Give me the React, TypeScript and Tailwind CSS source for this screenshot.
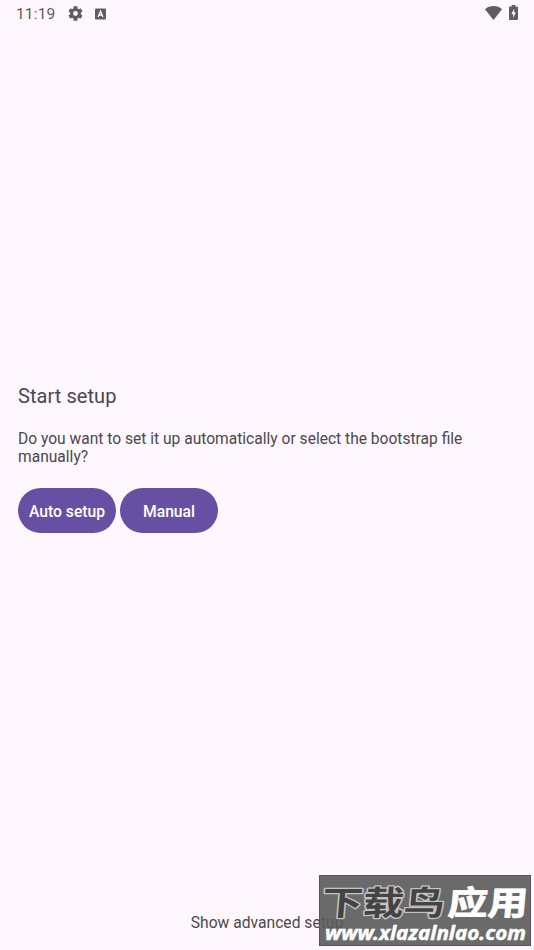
import React from 'react';

const GearIcon: React.FC<{ className?: string }> = ({ className }) => (
    <svg viewBox="2 2 20 20" className={className} fill="currentColor">
        <path d="M19.14 12.94c.04-.3.06-.61.06-.94 0-.32-.02-.64-.07-.94l2.03-1.58a.49.49 0 0 0 .12-.61l-1.92-3.32a.488.488 0 0 0-.59-.22l-2.39.96c-.5-.38-1.03-.7-1.62-.94l-.36-2.54a.484.484 0 0 0-.48-.41h-3.84c-.24 0-.43.17-.47.41l-.36 2.54c-.59.24-1.13.57-1.62.94l-2.39-.96c-.22-.08-.47 0-.59.22L2.74 8.87c-.12.21-.08.47.12.61l2.03 1.58c-.05.3-.09.63-.09.94s.02.64.07.94l-2.03 1.58a.49.49 0 0 0-.12.61l1.92 3.32c.12.22.37.29.59.22l2.39-.96c.5.38 1.03.7 1.62.94l.36 2.54c.05.24.24.41.48.41h3.84c.24 0 .44-.17.47-.41l.36-2.54c.59-.24 1.13-.56 1.62-.94l2.39.96c.22.08.47 0 .59-.22l1.92-3.32c.12-.22.07-.47-.12-.61l-2.01-1.58zM12 15.2A3.2 3.2 0 1 1 12 8.8a3.2 3.2 0 0 1 0 6.4z" />
    </svg>
);

const KeyboardIcon: React.FC<{ className?: string }> = ({ className }) => (
    <svg viewBox="0 0 11 12" className={className}>
        <rect y="0.5" width="11" height="11" rx="1.2" fill="currentColor" />
        <path d="M3.1 8.9 5.5 3.1 7.9 8.9M4 7h3" fill="none" stroke="#fef7ff" strokeWidth="1.3" />
    </svg>
);

const WifiIcon: React.FC<{ className?: string }> = ({ className }) => (
    <svg viewBox="0 0 17 14" className={className} fill="currentColor">
        <path d="M8.5 14 0 3.2C2.3 1.1 5.3 0 8.5 0s6.2 1.1 8.5 3.2z" />
    </svg>
);

const BatteryIcon: React.FC<{ className?: string }> = ({ className }) => (
    <svg viewBox="0 0 9 15" className={className}>
        <path d="M2.7 0h3.6v1.5H8a1 1 0 0 1 1 1V14a1 1 0 0 1-1 1H1a1 1 0 0 1-1-1V2.5a1 1 0 0 1 1-1h1.7z" fill="currentColor" />
        <path d="M5.2 3.8 2.4 9h1.7v3.7L6.9 7.6H5.2z" fill="#fef7ff" />
    </svg>
);

const StatusBar: React.FC = () => (
    <header className="flex h-7 items-center justify-between px-4 text-[#5f5c63]">
        <div className="flex items-center">
            <span className="w-[40px] whitespace-nowrap text-[15.5px] leading-7 tracking-[0.15px]">11:19</span>
            <GearIcon className="mb-px ml-[12px] h-[15px] w-[15px]" />
            <KeyboardIcon className="ml-3 h-3 w-[11px]" />
        </div>
        <div className="flex items-center gap-[7px] pb-[3px]">
            <WifiIcon className="h-[14px] w-[17px]" />
            <BatteryIcon className="h-[15px] w-[9px]" />
        </div>
    </header>
);

const SetupButton: React.FC<{ label: string }> = ({ label }) => (
    <button className="h-[45px] w-[98px] whitespace-nowrap rounded-full bg-[#6750a4] pt-[3px] text-[15.7px] font-medium text-white">
        {label}
    </button>
);

const Watermark: React.FC = () => (
    <div className="absolute left-[319px] top-[875px] h-[71px] w-[212px] border border-[#555] bg-[#5a5a5a]/90">
        <svg viewBox="320 876 210 69" className="h-full w-full">
            <g transform="translate(0 915) skewX(-5)" fontFamily="'Noto Sans CJK SC', sans-serif" fontWeight="700" fontSize="33.5" strokeLinejoin="round">
                <text x="321" y="0" textLength="123" lengthAdjust="spacingAndGlyphs" fill="#444" stroke="#c4c4c4" strokeWidth="2.6" paintOrder="stroke">下载鸟</text>
                <text x="447" y="0" textLength="80" lengthAdjust="spacingAndGlyphs" fill="#fff" stroke="#fff" strokeWidth="0.8">应用</text>
            </g>
            <text x="325" y="939.5" textLength="201" lengthAdjust="spacingAndGlyphs" fontFamily="'Noto Sans', sans-serif" fontWeight="700" fontStyle="italic" fontSize="20" fill="#fff" stroke="#fff" strokeWidth="0.5">www.xlazalnlao.com</text>
        </svg>
    </div>
);

const App: React.FC = () => {
    return (
        <div className="relative flex h-[950px] w-[534px] flex-col overflow-hidden bg-[#fef7ff] font-['Roboto',sans-serif] text-[#4b474e]">
            <StatusBar />
            <main className="flex flex-1 flex-col px-[18px] pt-[354px]">
                <h1 className="text-[20px] leading-7 tracking-[0.06px]">Start setup</h1>
                <p className="mt-5 text-[15.58px] leading-[18px]">
                    Do you want to set it up automatically or select the bootstrap file manually?
                </p>
                <div className="mt-[22px] flex gap-1">
                    <SetupButton label="Auto setup" />
                    <SetupButton label="Manual" />
                </div>
            </main>
            <footer className="flex h-[55px] justify-center">
                <button className="h-[55px] whitespace-nowrap text-[15.65px] leading-[56px]">Show advanced setup</button>
            </footer>
            <Watermark />
        </div>
    );
};

export default App;
